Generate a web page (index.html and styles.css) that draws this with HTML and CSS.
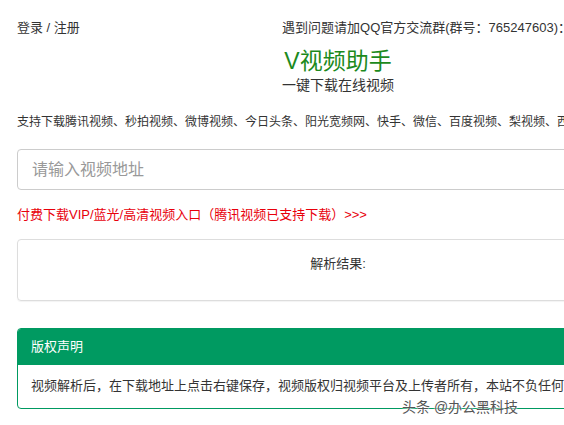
FILE: index.html
```html
<!DOCTYPE html>
<html lang="zh-CN">
<head>
  <meta charset="UTF-8" />
  <title>V视频助手</title>
  <link rel="stylesheet" href="styles.css">
</head>
<body>
  <div class="page">
    <header class="topbar">
      <a href="#" class="login">登录 / 注册</a>
      <span class="qq">遇到问题请加QQ官方交流群(群号：765247603)：</span>
    </header>

    <div class="brand">
      <h1>V视频助手</h1>
      <p>一键下载在线视频</p>
    </div>

    <p class="support">支持下载腾讯视频、秒拍视频、微博视频、今日头条、阳光宽频网、快手、微信、百度视频、梨视频、西瓜视频、美拍、火山小视频</p>

    <input class="url" type="text" placeholder="请输入视频地址">

    <a href="#" class="vip">付费下载VIP/蓝光/高清视频入口（腾讯视频已支持下载）&gt;&gt;&gt;</a>

    <div class="result">解析结果:</div>

    <div class="panel">
      <div class="panel_head">版权声明</div>
      <div class="panel_body">视频解析后，在下载地址上点击右键保存，视频版权归视频平台及上传者所有，本站不负任何法律责任。</div>
    </div>
  </div>

  <div class="mark">头条 @办公黑科技</div>
</body>
</html>
```

FILE: styles.css
```css
html, body {
  margin: 0;
  overflow: hidden;
}

body {
  font-family: "Liberation Sans", "Noto Sans CJK SC", sans-serif;
  font-size: 12px;
  color: #333;
  background: #fff;
  width: 564px;
  height: 425px;
  position: relative;
}

.page {
  width: 642px;
  padding: 0 0 0 17px;
}

.topbar {
  width: 554px;
  display: flex;
  justify-content: space-between;
  align-items: center;
  padding-top: 17px;
  height: 18px;
  font-size: 13px;
}

.topbar a {
  color: #333;
  text-decoration: none;
}

.brand {
  text-align: center;
}

.brand h1 {
  margin: 13px 0 0;
  font-size: 23px;
  font-weight: normal;
  color: #1c8a1c;
  line-height: 27px;
}

.brand p {
  margin: 1px 0 0;
  font-size: 14px;
  line-height: 18px;
}

.support {
  margin: 20px 0 0;
  white-space: nowrap;
  line-height: 16px;
}

.url {
  display: block;
  box-sizing: border-box;
  width: 100%;
  height: 41px;
  margin-top: 19px;
  padding: 0 14px;
  border: 1px solid #ccc;
  border-radius: 4px;
  font-family: inherit;
  font-size: 16px;
  color: #555;
}

.url::placeholder {
  color: #999;
}

.vip {
  display: block;
  margin-top: 17px;
  font-size: 13px;
  line-height: 16px;
  color: #e8000b;
  text-decoration: none;
}

.result {
  box-sizing: border-box;
  height: 62px;
  margin-top: 16px;
  padding-top: 13px;
  border: 1px solid #ddd;
  border-radius: 4px;
  text-align: center;
  font-size: 13px;
  box-shadow: 0 1px 1px rgba(0,0,0,0.05);
}

.panel {
  margin-top: 27px;
  border: 1px solid #009a61;
  border-radius: 4px;
  overflow: hidden;
}

.panel_head {
  background: #009a61;
  color: #fff;
  font-size: 13px;
  height: 36px;
  line-height: 36px;
  padding-left: 13px;
}

.panel_body {
  padding: 11px 13px 12px;
  font-size: 13px;
  line-height: 20px;
  white-space: nowrap;
}

.mark {
  position: absolute;
  left: 402px;
  top: 396px;
  font-size: 14px;
  color: #555;
  text-shadow: 0 0 2px #fff, 0 0 2px #fff;
}
```
